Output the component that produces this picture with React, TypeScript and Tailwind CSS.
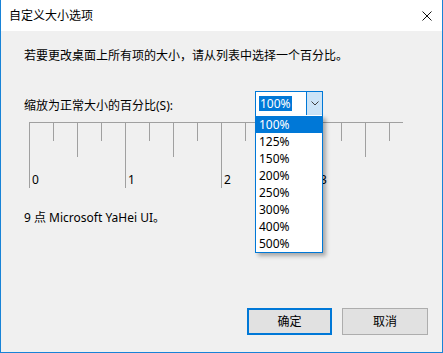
import { useState } from "react";

const options = ["100%", "125%", "150%", "200%", "250%", "300%", "400%", "500%"];

const Ruler = () => {
  const ticks = Array.from({ length: 16 }, (_, k) => k);
  return (
    <svg width={380} height={68} className="mt-[6px] block">
      <line x1={5} y1={0.5} x2={379} y2={0.5} stroke="#a0a0a0" />
      {ticks.map((k) => {
        const x = 5.5 + 24 * k;
        const h = k % 4 === 0 ? 66 : k % 2 === 0 ? 35 : 19;
        return <line key={k} x1={x} y1={0} x2={x} y2={h} stroke="#a0a0a0" />;
      })}
      {[0, 1, 2, 3].map((n) => (
        <text
          key={n}
          x={5 + 96 * n + 3}
          y={62}
          fontSize={12}
          fill="#000"
          fontFamily='"Noto Sans", sans-serif'
        >
          {n}
        </text>
      ))}
    </svg>
  );
};

export default function App() {
  const [selected] = useState(0);

  return (
    <div
      className="w-[443px] h-[353px] flex flex-col border-x border-b border-[#1883d7] bg-[#f0f0f0] text-black text-[12px]"
      style={{ fontFamily: '"Noto Sans", "Noto Sans CJK SC", sans-serif' }}
    >
      <div className="h-[31px] bg-white flex items-center justify-between pl-2 pr-[10px]">
        <span className="leading-4">自定义大小选项</span>
        <svg width={10} height={10} viewBox="0 0 10 10">
          <path d="M0.5 0.5 L9.5 9.5 M9.5 0.5 L0.5 9.5" stroke="#111" strokeWidth={1} />
        </svg>
      </div>

      <div className="flex-1 flex flex-col pl-[23px] pr-[14px] pb-[17px]">
        <p className="mt-[17px] leading-4">
          若要更改桌面上所有项的大小，请从列表中选择一个百分比。
        </p>

        <div className="mt-[27px] flex items-start h-[25px]">
          <span className="w-[231px] mt-[7px] leading-4">缩放为正常大小的百分比(S):</span>
          <div className="relative w-[68px] h-[25px] border border-[#0078d7] bg-white flex">
            <div className="flex-1 flex items-center pl-[3px]">
              <span className="bg-[#0078d7] text-white leading-[15px] px-[1px]">100%</span>
            </div>
            <div className="w-[16px] border-l border-[#0078d7] bg-[#cce4f7] flex items-center justify-center">
              <svg width={8} height={5} viewBox="0 0 8 5">
                <path d="M0.5 0.5 L4 4 L7.5 0.5" fill="none" stroke="#404040" />
              </svg>
            </div>

            <ul className="absolute left-[-1px] top-full w-[68px] pt-[1px] bg-white border-x border-b border-[#0078d7] shadow-[3px_3px_4px_rgba(0,0,0,0.3)] z-10">
              {options.map((o, i) => (
                <li
                  key={o}
                  className={
                    "h-[17px] leading-[18px] pl-[3px] " +
                    (i === selected ? "bg-[#0078d7] text-white" : "text-black")
                  }
                >
                  {o}
                </li>
              ))}
            </ul>
          </div>
        </div>

        <Ruler />

        <p className="mt-[20px] leading-4">9 点 Microsoft YaHei UI。</p>

        <div className="mt-auto flex justify-end gap-[10px]">
          <button className="w-[85px] h-[27px] border-2 border-[#0078d7] bg-[#e1e1e1] flex items-center justify-center leading-4">
            确定
          </button>
          <button className="w-[86px] h-[27px] border border-[#adadad] bg-[#e1e1e1] flex items-center justify-center leading-4">
            取消
          </button>
        </div>
      </div>
    </div>
  );
}
